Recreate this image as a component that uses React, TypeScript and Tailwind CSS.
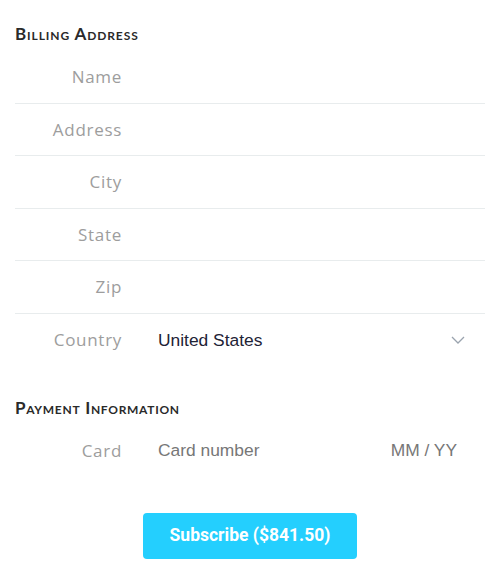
import React from "react";

const labelFont = { fontFamily: '"Open Sans", "DejaVu Sans", sans-serif' };
const headFont = { fontFamily: '"Lato", "Open Sans", sans-serif', fontVariant: "small-caps" as const };

function Row({ label, children, border = true }: { label: string; children?: React.ReactNode; border?: boolean }) {
  return (
    <div className={`flex h-[52.5px] items-center ${border ? "border-b border-[#e8eced]" : ""}`}>
      <div className="w-[107px] shrink-0 text-right text-[17px] tracking-[0.7px] text-[#9d9d9d]" style={labelFont}>
        {label}
      </div>
      <div className="ml-[36px] flex flex-1 items-center pr-[18px] font-['Liberation_Sans',Arial,sans-serif] text-[17.4px]">
        {children}
      </div>
    </div>
  );
}

export default function App() {
  return (
    <div className="w-[496px] h-[582px] bg-white pl-[15px] pr-[11px]">
      <div className="pt-[24px] pb-[7px] text-[17px] leading-[20px] font-bold text-[#2a2a2a] tracking-[0.9px]" style={headFont}>
        Billing Address
      </div>
      <Row label="Name" />
      <Row label="Address" />
      <Row label="City" />
      <Row label="State" />
      <Row label="Zip" />
      <Row label="Country" border={false}>
        <span className="flex-1 text-[#1e2336]">United States</span>
        <svg width="14" height="8" viewBox="0 0 14 8" className="mr-[2px]">
          <path d="M1 1l6 6 6-6" fill="none" stroke="#9aa3ae" strokeWidth="1.3" />
        </svg>
      </Row>
      <div className="pt-[32px] pb-[6px] text-[17px] leading-[20px] font-bold text-[#2a2a2a] tracking-[0.7px]" style={headFont}>
        Payment Information
      </div>
      <Row label="Card" border={false}>
        <span className="flex-1 text-[#777]">Card number</span>
        <span className="mr-[10px] text-[#777]">MM / YY</span>
      </Row>
      <div className="mt-[36px] flex justify-center">
        <button
          className="h-[46px] w-[214px] rounded-[4px] bg-[#24cffe] text-[17.5px] font-bold text-white"
          style={{ fontFamily: "Roboto, sans-serif" }}
        >
          Subscribe ($841.50)
        </button>
      </div>
    </div>
  );
}
